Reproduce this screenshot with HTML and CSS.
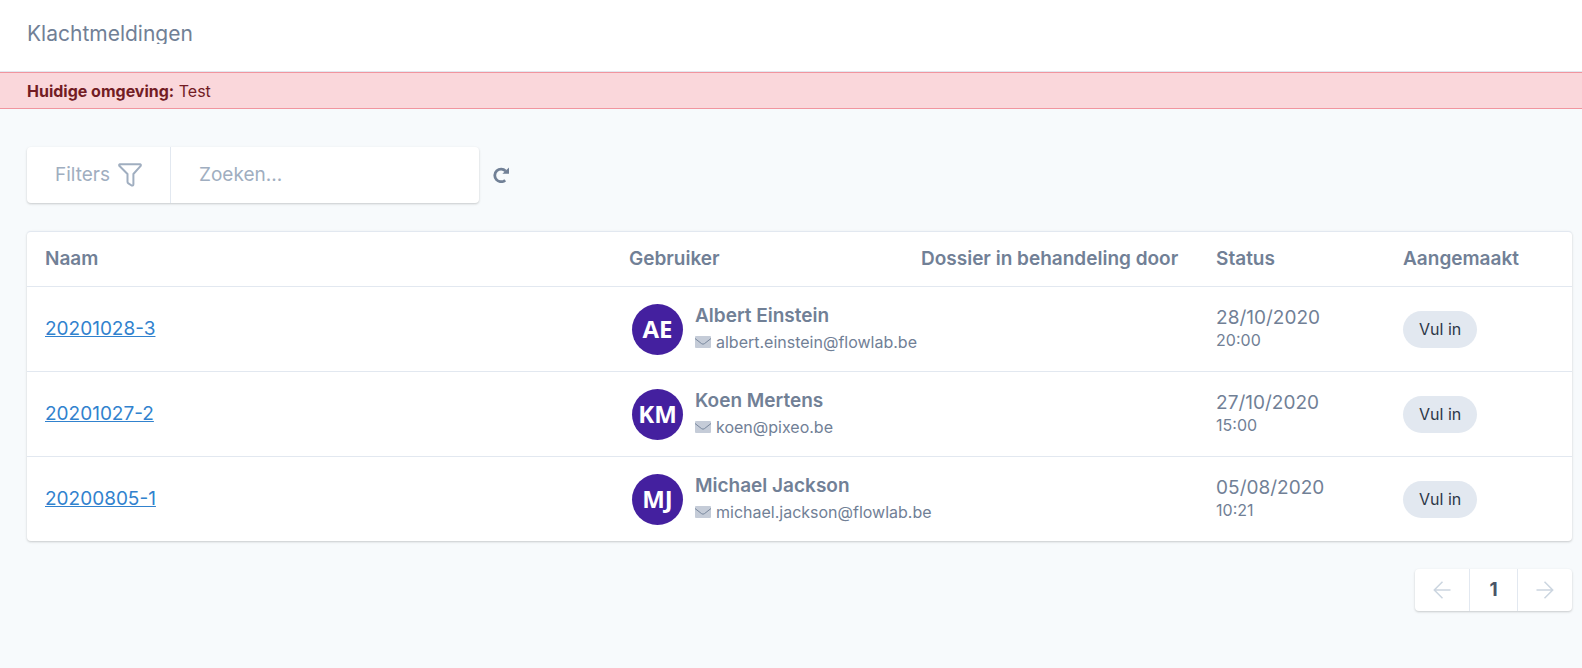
FILE: index.html
```html
<!DOCTYPE html>
<html lang="nl">
<head>
    <meta charset="UTF-8">
    <meta name="viewport" content="width=device-width, initial-scale=1.0">
    <title>Klachtmeldingen</title>
    <link rel="stylesheet" href="styles.css">
</head>
<body>

    <!-- Shared icons -->
    <svg class="icon-defs" aria-hidden="true">
        <symbol id="mail" viewBox="0 0 16 12">
            <rect width="16" height="12" rx="1" fill="#c5ccd8"/>
            <path d="M0 2.5 L6.5 7.6 Q8 8.8 9.5 7.6 L16 2.5" fill="none" stroke="#718096" stroke-width="0.9"/>
        </symbol>
    </svg>

    <header class="header">
        <h1>Klachtmeldingen</h1>
    </header>

    <div class="environment"><strong>Huidige omgeving:</strong> Test</div>

    <main class="content">
        <!-- Filters and search -->
        <div class="toolbar">
            <div class="search-box">
                <button class="filter-button" type="button">
                    Filters
                    <svg width="24" height="24" viewBox="0 0 24 24" fill="none" stroke="currentColor" stroke-width="2" stroke-linejoin="round">
                        <path d="M1.8 1.2 H22.2 Q23.2 1.4 22.7 2.8 L15.4 11 V21.3 Q15.3 23 13.6 22.5 L10.4 20.4 Q9.5 19.8 9.5 18.8 V11 L1.3 2.8 Q0.8 1.4 1.8 1.2 Z"/>
                    </svg>
                </button>
                <input class="search-input" type="text" placeholder="Zoeken..." aria-label="Zoeken">
            </div>
            <button class="refresh-button" type="button" aria-label="Vernieuwen">
                <svg width="16" height="16" viewBox="0 0 16 16" fill="none">
                    <path d="M12.6 4 A6.3 6.3 0 1 0 12.2 13.2" stroke="currentColor" stroke-width="2.8"/>
                    <path d="M16 0.6 V6.8 H9.4 Z" fill="currentColor"/>
                </svg>
            </button>
        </div>

        <table class="reports">
            <thead>
                <tr>
                    <th class="col-name">Naam</th>
                    <th class="col-user">Gebruiker</th>
                    <th class="col-handler">Dossier in behandeling door</th>
                    <th class="col-status">Status</th>
                    <th class="col-created">Aangemaakt</th>
                </tr>
            </thead>
            <tbody>
                <tr>
                    <td><a href="#">20201028-3</a></td>
                    <td>
                        <div class="user">
                            <span class="avatar">AE</span>
                            <div class="user-info">
                                <div class="user-name">Albert Einstein</div>
                                <div class="user-mail"><svg width="16" height="12"><use href="#mail"/></svg>albert.einstein@flowlab.be</div>
                            </div>
                        </div>
                    </td>
                    <td></td>
                    <td><div class="date">28/10/2020</div><div class="time">20:00</div></td>
                    <td><button class="fill-button" type="button">Vul in</button></td>
                </tr>
                <tr>
                    <td><a href="#">20201027-2</a></td>
                    <td>
                        <div class="user">
                            <span class="avatar">KM</span>
                            <div class="user-info">
                                <div class="user-name">Koen Mertens</div>
                                <div class="user-mail"><svg width="16" height="12"><use href="#mail"/></svg>koen@pixeo.be</div>
                            </div>
                        </div>
                    </td>
                    <td></td>
                    <td><div class="date">27/10/2020</div><div class="time">15:00</div></td>
                    <td><button class="fill-button" type="button">Vul in</button></td>
                </tr>
                <tr>
                    <td><a href="#">20200805-1</a></td>
                    <td>
                        <div class="user">
                            <span class="avatar">MJ</span>
                            <div class="user-info">
                                <div class="user-name">Michael Jackson</div>
                                <div class="user-mail"><svg width="16" height="12"><use href="#mail"/></svg>michael.jackson@flowlab.be</div>
                            </div>
                        </div>
                    </td>
                    <td></td>
                    <td><div class="date">05/08/2020</div><div class="time">10:21</div></td>
                    <td><button class="fill-button" type="button">Vul in</button></td>
                </tr>
            </tbody>
        </table>

        <nav class="pagination" aria-label="Paginering">
            <button type="button" aria-label="Vorige">
                <svg width="18" height="18" viewBox="0 0 18 18" fill="none" stroke="currentColor" stroke-width="1.5">
                    <path d="M17.5 9 H1.5 M9.5 0.8 L1.3 9 L9.5 17.2"/>
                </svg>
            </button>
            <button class="current" type="button">1</button>
            <button type="button" aria-label="Volgende">
                <svg width="18" height="18" viewBox="0 0 18 18" fill="none" stroke="currentColor" stroke-width="1.5">
                    <path d="M0.5 9 H16.5 M8.5 0.8 L16.7 9 L8.5 17.2"/>
                </svg>
            </button>
        </nav>
    </main>

</body>
</html>
```
FILE: styles.css
```css
* {
    box-sizing: border-box;
}
body {
    margin: 0;
    background: #f7fafc;
    color: #718096;
    font-family: Inter, "Liberation Sans", sans-serif;
    font-size: 19px;
    line-height: 28px;
}
button, input {
    font: inherit;
    color: inherit;
    border: none;
    margin: 0;
    padding: 0;
    background: none;
}
button {
    cursor: pointer;
}
svg {
    flex: none;
}
.icon-defs {
    display: none;
}
.header {
    padding: 24px 27px 27px;
    background: white;
    border-bottom: 1px solid #e2e8f0;
}
.header h1 {
    margin: 0;
    font-size: 21px;
    font-weight: 400;
    line-height: 20px;
    overflow: hidden;
}
.environment {
    padding: 6px 27px 4px;
    background: #fad7db;
    border-top: 1px solid #f1959f;
    border-bottom: 1px solid #f1959f;
    color: #721c24;
    font-size: 16px;
    line-height: 25px;
}
.environment strong {
    font-weight: 700;
}
.content {
    padding: 38px 10px 28px 27px;
}
.toolbar {
    display: flex;
    align-items: center;
    gap: 14px;
    margin-bottom: 28px;
}
.search-box {
    display: flex;
    height: 56px;
    background: white;
    border-radius: 4px;
    box-shadow: 0 1px 3px rgba(0, 0, 0, 0.1), 0 1px 2px rgba(0, 0, 0, 0.1);
    color: #a0aec0;
}
.filter-button {
    display: flex;
    align-items: center;
    gap: 8px;
    padding: 0 28px;
    border-right: 1px solid #e2e8f0;
}
.search-input {
    width: 308px;
    padding: 0 28px;
}
.search-input::placeholder {
    color: #a0aec0;
    opacity: 1;
}
.refresh-button {
    display: flex;
}
.reports {
    width: 100%;
    table-layout: fixed;
    border-spacing: 0;
    background: white;
    border-top: 1px solid #e2e8f0;
    border-radius: 4px;
    box-shadow: 0 1px 3px rgba(0, 0, 0, 0.1), 0 1px 2px rgba(0, 0, 0, 0.1);
}
.reports th, .reports td {
    padding: 0 0 0 18px;
    text-align: left;
    white-space: nowrap;
    vertical-align: middle;
}
.reports th {
    height: 54px;
    font-weight: 600;
}
.reports td {
    height: 85px;
    border-top: 1px solid #e2e8f0;
}
.col-name {
    width: 37.8%;
}
.col-user {
    width: 18.9%;
}
.col-handler {
    width: 19.1%;
}
.col-status {
    width: 12.1%;
}
.reports a {
    color: #3182ce;
}
.user {
    display: flex;
    align-items: center;
    gap: 12px;
    padding-left: 3px;
}
.avatar {
    display: flex;
    flex: none;
    align-items: center;
    justify-content: center;
    width: 51px;
    height: 51px;
    border-radius: 50%;
    background: #44209f;
    color: white;
    font-family: "Open Sans", sans-serif;
    font-size: 24px;
    font-weight: 700;
}
.user-info {
    padding-bottom: 2px;
}
.user-name {
    font-weight: 600;
    line-height: 27px;
}
.user-mail {
    display: flex;
    align-items: center;
    gap: 5px;
    font-size: 16px;
    line-height: 26px;
}
.date {
    line-height: 22px;
}
.time {
    font-size: 16px;
    line-height: 22px;
}
.fill-button {
    display: block;
    padding: 6px 16px;
    border-radius: 20px;
    background: #e2e8f0;
    color: #2d3748;
    font-size: 16px;
    line-height: 25px;
}
.pagination {
    display: flex;
    width: max-content;
    margin: 28px 0 0 auto;
    background: white;
    border-radius: 4px;
    box-shadow: 0 1px 3px rgba(0, 0, 0, 0.1), 0 1px 2px rgba(0, 0, 0, 0.1);
    color: #cbd5e0;
}
.pagination button {
    display: flex;
    align-items: center;
    justify-content: center;
    min-width: 48px;
    height: 42px;
    padding: 0 18px;
}
.pagination button + button {
    border-left: 1px solid #e2e8f0;
}
.pagination .current {
    color: #4a5568;
    font-weight: 700;
}
```
